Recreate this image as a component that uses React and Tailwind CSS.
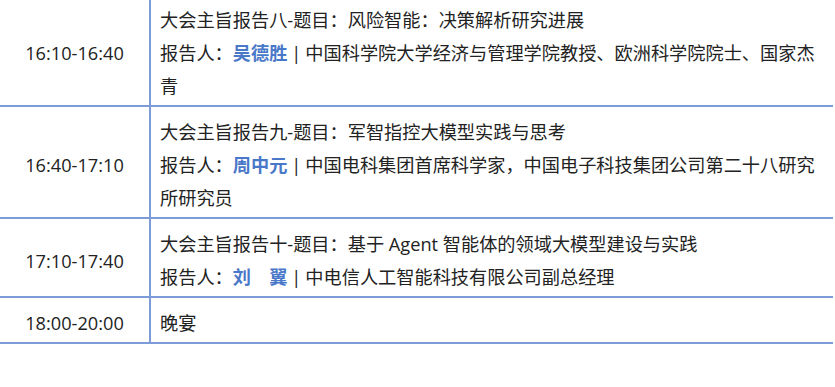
const rows = [
  {
    time: '16:10-16:40',
    title: '大会主旨报告八-题目：风险智能：决策解析研究进展',
    name: '吴德胜',
    desc: '中国科学院大学经济与管理学院教授、欧洲科学院院士、国家杰青',
  },
  {
    time: '16:40-17:10',
    title: '大会主旨报告九-题目：军智指控大模型实践与思考',
    name: '周中元',
    desc: '中国电科集团首席科学家，中国电子科技集团公司第二十八研究所研究员',
  },
  {
    time: '17:10-17:40',
    title: '大会主旨报告十-题目：基于 Agent 智能体的领域大模型建设与实践',
    name: '刘\u3000翼',
    desc: '中电信人工智能科技有限公司副总经理',
  },
  { time: '18:00-20:00', title: '晚宴' },
];

export default function App() {
  return (
    <div
      className="w-[835px] h-[387px] overflow-hidden bg-white text-[#222] text-[18.2px] leading-[33px]"
      style={{ fontFamily: '"Open Sans", "Noto Sans CJK SC", sans-serif' }}
    >
      <div className="w-[833px] -mt-[5px]">
        {rows.map((r) => (
          <div
            key={r.time}
            className="grid grid-cols-[151px_1fr] border-b-2 border-[#7d9bd8]"
          >
            <div className="flex items-center justify-center border-r-2 border-[#7d9bd8] pt-[9px] pb-[2px]">
              {r.time}
            </div>
            <div className="pl-[9px] pr-[6px] pt-[9px] pb-[2px]">
              <div>{r.title}</div>
              {r.name && (
                <div>
                  报告人：
                  <span className="font-bold text-[#4a78c9]">{r.name}</span>
                  <span className="mx-[4px]">|</span>
                  {r.desc}
                </div>
              )}
            </div>
          </div>
        ))}
      </div>
    </div>
  );
}
